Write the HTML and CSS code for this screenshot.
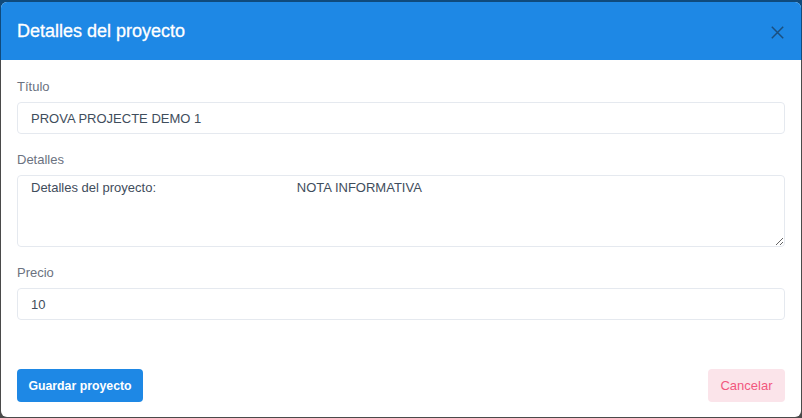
FILE: index.html
```html
<!DOCTYPE html>
<html lang="es">
<head>
<meta charset="utf-8">
<title>Detalles del proyecto</title>
<link rel="stylesheet" href="styles.css">
</head>
<body>
<div class="modal">
  <div class="modal-header">
    <h2 class="modal-title">Detalles del proyecto</h2>
    <button class="close" aria-label="Cerrar">
      <svg width="13" height="13" viewBox="0 0 13 13"><path d="M0.8 0.8L12.2 12.2M12.2 0.8L0.8 12.2" stroke="#1b4f7f" stroke-width="1.5" fill="none"/></svg>
    </button>
  </div>
  <div class="modal-body">
    <div class="field">
      <label class="label">Título</label>
      <input class="control" type="text" value="PROVA PROJECTE DEMO 1">
    </div>
    <div class="field">
      <label class="label">Detalles</label>
      <textarea class="control textarea">Detalles del proyecto:                                       NOTA INFORMATIVA</textarea>
    </div>
    <div class="field">
      <label class="label">Precio</label>
      <input class="control" type="text" value="10">
    </div>
  </div>
  <div class="modal-footer">
    <button class="btn btn-primary">Guardar proyecto</button>
    <button class="btn btn-cancel">Cancelar</button>
  </div>
</div>
</body>
</html>
```
FILE: styles.css
```css
* { box-sizing: border-box; }
html, body { height: 100%; }
body {
  margin: 0;
  padding: 2px 1px 1px 1px;
  background: linear-gradient(#0f4a7c 0, #0f4a7c 60px, #4a4a4a 60px, #4a4a4a 100%);
  font-family: "Liberation Sans", Arial, sans-serif;
  overflow: hidden;
}
.modal {
  background: #fff;
  border-radius: 6px;
  overflow: hidden;
  height: 415px;
  display: flex;
  flex-direction: column;
}
.modal-header {
  background: #1e88e5;
  height: 58px;
  display: flex;
  align-items: center;
  justify-content: space-between;
  padding: 0 17px 0 16px;
}
.modal-title {
  margin: 0;
  color: #fff;
  font-size: 18px;
  font-weight: 400;
  -webkit-text-stroke: 0.3px #fff;
}
.close {
  background: none;
  border: 0;
  padding: 0;
  width: 13px;
  height: 13px;
  display: flex;
  margin-top: 2px;
}
.modal-body {
  padding: 17px 16px 0 16px;
  display: flex;
  flex-direction: column;
  gap: 16px;
}
.field {
  display: flex;
  flex-direction: column;
  gap: 5px;
}
.label {
  font-size: 13px;
  line-height: 20px;
  color: #6b7280;
}
.control {
  font-family: "Liberation Sans", Arial, sans-serif;
  font-size: 13px;
  color: #3f4d5c;
  border: 1px solid #e5e9ef;
  border-radius: 4px;
  height: 32px;
  padding: 0 13px;
  background: #fff;
  outline: none;
  width: 100%;
}
.textarea {
  height: 72px;
  padding: 2px 13px;
  line-height: 20px;
  resize: vertical;
  white-space: pre;
}
.modal-footer {
  margin-top: auto;
  display: flex;
  justify-content: space-between;
  padding: 0 16px 15px 16px;
}
.btn {
  border: 0;
  border-radius: 4px;
  height: 33px;
  font-family: "Liberation Sans", Arial, sans-serif;
  font-size: 13px;
  padding: 0;
  white-space: nowrap;
}
.btn-primary {
  background: #1e88e5;
  color: #fff;
  font-weight: 700;
  font-size: 12.3px;
  width: 126px;
}
.btn-cancel {
  background: #fbe4ea;
  color: #f2577e;
  width: 77px;
}
```
